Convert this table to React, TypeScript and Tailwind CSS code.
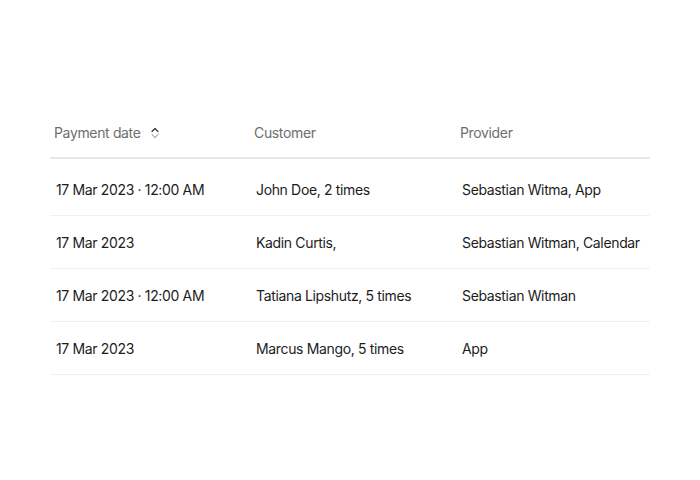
const ROWS = [
  { date: '17 Mar 2023 · 12:00 AM', customer: 'John Doe, 2 times', provider: 'Sebastian Witma, App' },
  { date: '17 Mar 2023', customer: 'Kadin Curtis,', provider: 'Sebastian Witman, Calendar' },
  { date: '17 Mar 2023 · 12:00 AM', customer: 'Tatiana Lipshutz, 5 times', provider: 'Sebastian Witman' },
  { date: '17 Mar 2023', customer: 'Marcus Mango, 5 times', provider: 'App' },
];

function SortIcon() {
  return (
    <svg width="10" height="12" viewBox="0 0 10 12" fill="none" aria-hidden="true">
      <path d="M2 4.5L5 1.5L8 4.5" stroke="#333" strokeWidth="1.2" strokeLinecap="round" strokeLinejoin="round" />
      <path d="M2 7.5L5 10.5L8 7.5" stroke="#b5b5b5" strokeWidth="1.2" strokeLinecap="round" strokeLinejoin="round" />
    </svg>
  );
}

export default function App() {
  return (
    <div
      className="w-[700px] h-[480px] bg-white flex items-center justify-center pt-[4px] tracking-[-0.35px]"
      style={{ fontFamily: 'Inter, "Noto Sans", sans-serif' }}
    >
      <div className="w-[600px]">
        <div className="grid grid-cols-[200px_206px_194px] h-[50px] items-center border-b-2 border-[#e8e8e8] text-sm text-[#6e6e6e]">
          <div className="px-1 flex items-center gap-[9px]">
            <span>Payment date</span>
            <SortIcon />
          </div>
          <div className="px-1">Customer</div>
          <div className="px-1">Provider</div>
        </div>
        <div className="mt-1">
          {ROWS.map((row, i) => (
            <div
              key={i}
              className="grid grid-cols-[200px_206px_194px] h-[53px] pt-[1px] items-center border-b border-[#f0f0f0] text-sm text-[#1c1c1c]"
            >
              <div className="px-1.5">{row.date}</div>
              <div className="px-1.5">{row.customer}</div>
              <div className="px-1.5 whitespace-nowrap">{row.provider}</div>
            </div>
          ))}
        </div>
      </div>
    </div>
  );
}
